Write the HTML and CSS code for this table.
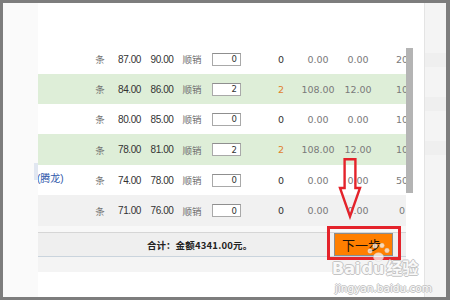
FILE: index.html
```html
<!DOCTYPE html>
<html lang="zh-CN">
<head>
<meta charset="utf-8">
<title>订单</title>
<link rel="stylesheet" href="styles.css">
</head>
<body>
<div class="panel">
  <div class="left"><div class="left-mark"></div></div>
  <div class="center">
    <div class="top"></div>
    <div class="body">
      <div class="table">
        <div class="row">
          <span class="c0"></span><span class="c1">条</span><span class="c2">87.00</span><span class="c3">90.00</span><span class="c4">顺销</span>
          <span class="c5"><input class="qty" value="0" readonly></span><span class="sp"></span>
          <span class="c6">0</span><span class="c7">0.00</span><span class="c8">0.00</span><span class="c9">20</span>
        </div>
        <div class="row green">
          <span class="c0"></span><span class="c1">条</span><span class="c2">84.00</span><span class="c3">86.00</span><span class="c4">顺销</span>
          <span class="c5"><input class="qty" value="2" readonly></span><span class="sp"></span>
          <span class="c6 orange">2</span><span class="c7">108.00</span><span class="c8">12.00</span><span class="c9">10</span>
        </div>
        <div class="row">
          <span class="c0"></span><span class="c1">条</span><span class="c2">80.00</span><span class="c3">85.00</span><span class="c4">顺销</span>
          <span class="c5"><input class="qty" value="0" readonly></span><span class="sp"></span>
          <span class="c6">0</span><span class="c7">0.00</span><span class="c8">0.00</span><span class="c9">10</span>
        </div>
        <div class="row green tall">
          <span class="c0"></span><span class="c1">条</span><span class="c2">78.00</span><span class="c3">81.00</span><span class="c4">顺销</span>
          <span class="c5"><input class="qty" value="2" readonly></span><span class="sp"></span>
          <span class="c6 orange">2</span><span class="c7">108.00</span><span class="c8">12.00</span><span class="c9">10</span>
        </div>
        <div class="row">
          <span class="c0 name">(腾龙)</span><span class="c1">条</span><span class="c2">74.00</span><span class="c3">78.00</span><span class="c4">顺销</span>
          <span class="c5"><input class="qty" value="0" readonly></span><span class="sp"></span>
          <span class="c6">0</span><span class="c7">0.00</span><span class="c8">0.00</span><span class="c9">50</span>
        </div>
        <div class="row gray tall">
          <span class="c0"></span><span class="c1">条</span><span class="c2">71.00</span><span class="c3">76.00</span><span class="c4">顺销</span>
          <span class="c5"><input class="qty" value="0" readonly></span><span class="sp"></span>
          <span class="c6">0</span><span class="c7">0.00</span><span class="c8">0.00</span><span class="c9">0</span>
        </div>
      </div>
      <div class="vscroll"><div class="thumb"></div></div>
    </div>
    <div class="gap"></div>
    <div class="footer">
      <span class="sum-label">合计：</span><span class="sum">金额4341.00元。</span>
      <button class="next">下一步</button>
    </div>
    <div class="below"></div>
  </div>
  <div class="gutter"></div>
  <div class="side"><div class="band"></div><div class="band"></div><div class="band"></div></div>

  <div class="redbox"></div>
  <svg class="arrow" width="28" height="64" viewBox="0 0 28 64">
    <path d="M8.6 3.2 H19.4 V32 H24 L14 60.5 L4 32 H8.6 Z" fill="none" stroke="#e4232b" stroke-width="2.4" stroke-linejoin="miter"/>
  </svg>
  <svg class="paw" width="30" height="24" viewBox="0 0 30 24">
    <g fill="#ffffff" fill-opacity="0.7" stroke="#d2d2d2" stroke-opacity="0.8" stroke-width="0.6">
      <circle cx="5" cy="10" r="2.2"/>
      <circle cx="10" cy="5" r="2.2"/>
      <circle cx="17" cy="4.5" r="2.2"/>
      <circle cx="22" cy="9.5" r="2.2"/>
      <ellipse cx="13.5" cy="16" rx="5" ry="4.2"/>
    </g>
  </svg>
  <div class="wm">
    <div class="wm1">Bai<span class="wm-gap"></span>du<span class="wm-cn">经验</span></div>
    <div class="wm2">jingyan.baidu.com</div>
  </div>
</div>
</body>
</html>
```
FILE: styles.css
```css
html, body {
  margin: 0;
}
body {
  width: 450px;
  height: 300px;
  box-sizing: border-box;
  padding: 3px 4px 3px 3px;
  background: #7d7d7d;
  font-family: "Liberation Sans", "Noto Sans CJK SC", sans-serif;
  overflow: hidden;
}
.panel {
  position: relative;
  display: flex;
  height: 294px;
  background: #ffffff;
}
.left {
  width: 35px;
  background: #fafafa;
  position: relative;
}
.left-mark {
  margin-top: 160px;
  margin-left: 31px;
  width: 4px;
  height: 17px;
  background: #e1e7f1;
}
.center {
  width: 375px;
  display: flex;
  flex-direction: column;
}
.top {
  height: 41px;
}
.body {
  display: flex;
}
.table {
  width: 368px;
  overflow: hidden;
}
.row {
  display: flex;
  align-items: center;
  height: 30px;
  white-space: nowrap;
  background: #ffffff;
}
.row.tall {
  height: 31px;
}
.row.green {
  background: #deeed8;
}
.row.gray {
  background: #f1f1f1;
}
.row > span {
  flex: none;
  text-align: center;
  font-size: 10px;
  color: #333;
}
.c0 { width: 48px; }
.c0.name {
  text-align: left;
  color: #2f57a9;
  font-size: 10px;
  margin-left: -1px;
  width: 49px;
  margin-top: -6px;
}
.c1, .c4 {
  font-family: "Noto Sans CJK SC", sans-serif;
  font-size: 9.5px !important;
  color: #707070 !important;
}
.c1 { width: 28px; }
.c2 { width: 31px; letter-spacing: -0.45px; }
.c3 { width: 34px; letter-spacing: -0.45px; }
.c4 { width: 26px; }
.c5 { width: 43px; display: flex; justify-content: center; }
.sp { width: 16px; }
.c6, .c7, .c8, .c9 {
  font-family: "DejaVu Sans", sans-serif;
  font-size: 9.5px !important;
}
.c6 { width: 34px; color: #333 !important; }
.c6.orange { color: #e07f2c !important; }
.c7, .c8, .c9 { color: #7a7a7a !important; }
.c7 { width: 40px; }
.c8 { width: 40px; }
.c9 { width: 48px; }
.qty {
  box-sizing: border-box;
  width: 29px;
  height: 13px;
  margin: 0;
  padding: 0 3px 0 0;
  border: 1px solid #a9a9a9;
  border-top-color: #8f8f8f;
  background: #fff;
  text-align: right;
  font-family: "DejaVu Sans", sans-serif;
  font-size: 8.5px;
  color: #333;
  outline: none;
}
.vscroll {
  width: 7px;
  padding-top: 4px;
}
.thumb {
  height: 145px;
  background: #b4b4b4;
}
.gap {
  width: 368px;
  height: 6px;
  background: #f8f8f8;
}
.footer {
  width: 368px;
  height: 23px;
  border-top: 1px solid #d6d6d6;
  border-bottom: 1px solid #cad4dd;
  background: #efefef;
  display: flex;
  align-items: center;
  font-family: "Noto Sans CJK SC", sans-serif;
  font-weight: bold;
  font-size: 9.5px;
  color: #222;
}
.sum-label {
  margin-left: 109px;
}
.sum {
  margin-left: 0;
  letter-spacing: 0.2px;
}
.next {
  margin: 0 13px 0 auto;
  width: 59px;
  height: 23px;
  box-sizing: border-box;
  border: 1px solid #8c8c8c;
  background: #ff7f00;
  font-family: "Noto Sans CJK SC", sans-serif;
  font-weight: normal;
  font-size: 13px;
  color: #1e1206;
  padding: 0 4px 0 0;
  line-height: 20px;
}
.below {
  width: 368px;
  height: 15px;
  background: #f4f4f4;
}
.gutter {
  width: 11px;
  border-right: 1px solid #e4e4e4;
}
.side {
  width: 21px;
  background: #f4f4f4;
  display: flex;
  flex-direction: column;
  padding-top: 50px;
  gap: 30px;
}
.band {
  height: 14px;
  background: #efefef;
}
.redbox {
  position: absolute;
  left: 324px;
  top: 223px;
  width: 74px;
  height: 34px;
  box-sizing: border-box;
  border: 3px solid #e4232b;
}
.arrow {
  position: absolute;
  left: 333px;
  top: 153px;
}
.paw {
  position: absolute;
  left: 362px;
  top: 238px;
}
.wm {
  position: absolute;
  left: 329px;
  top: 254px;
  color: rgba(255, 255, 255, 0.92);
  font-family: "DejaVu Sans", sans-serif;
  font-weight: bold;
  text-shadow: 1px 0 0 #c4c4c4, -1px 0 0 #c4c4c4, 0 1px 0 #c4c4c4, 0 -1px 0 #c4c4c4;
}
.wm1 {
  font-size: 16px;
  line-height: 20px;
  white-space: nowrap;
}
.wm-gap {
  display: inline-block;
  width: 1px;
}
.wm-cn {
  font-family: "Noto Sans CJK SC", sans-serif;
  font-size: 16px;
  margin-left: 2px;
}
.wm2 {
  font-size: 10.5px;
  font-weight: normal;
  line-height: 12px;
  margin-top: 3px;
  margin-left: 3px;
  white-space: nowrap;
}
```
